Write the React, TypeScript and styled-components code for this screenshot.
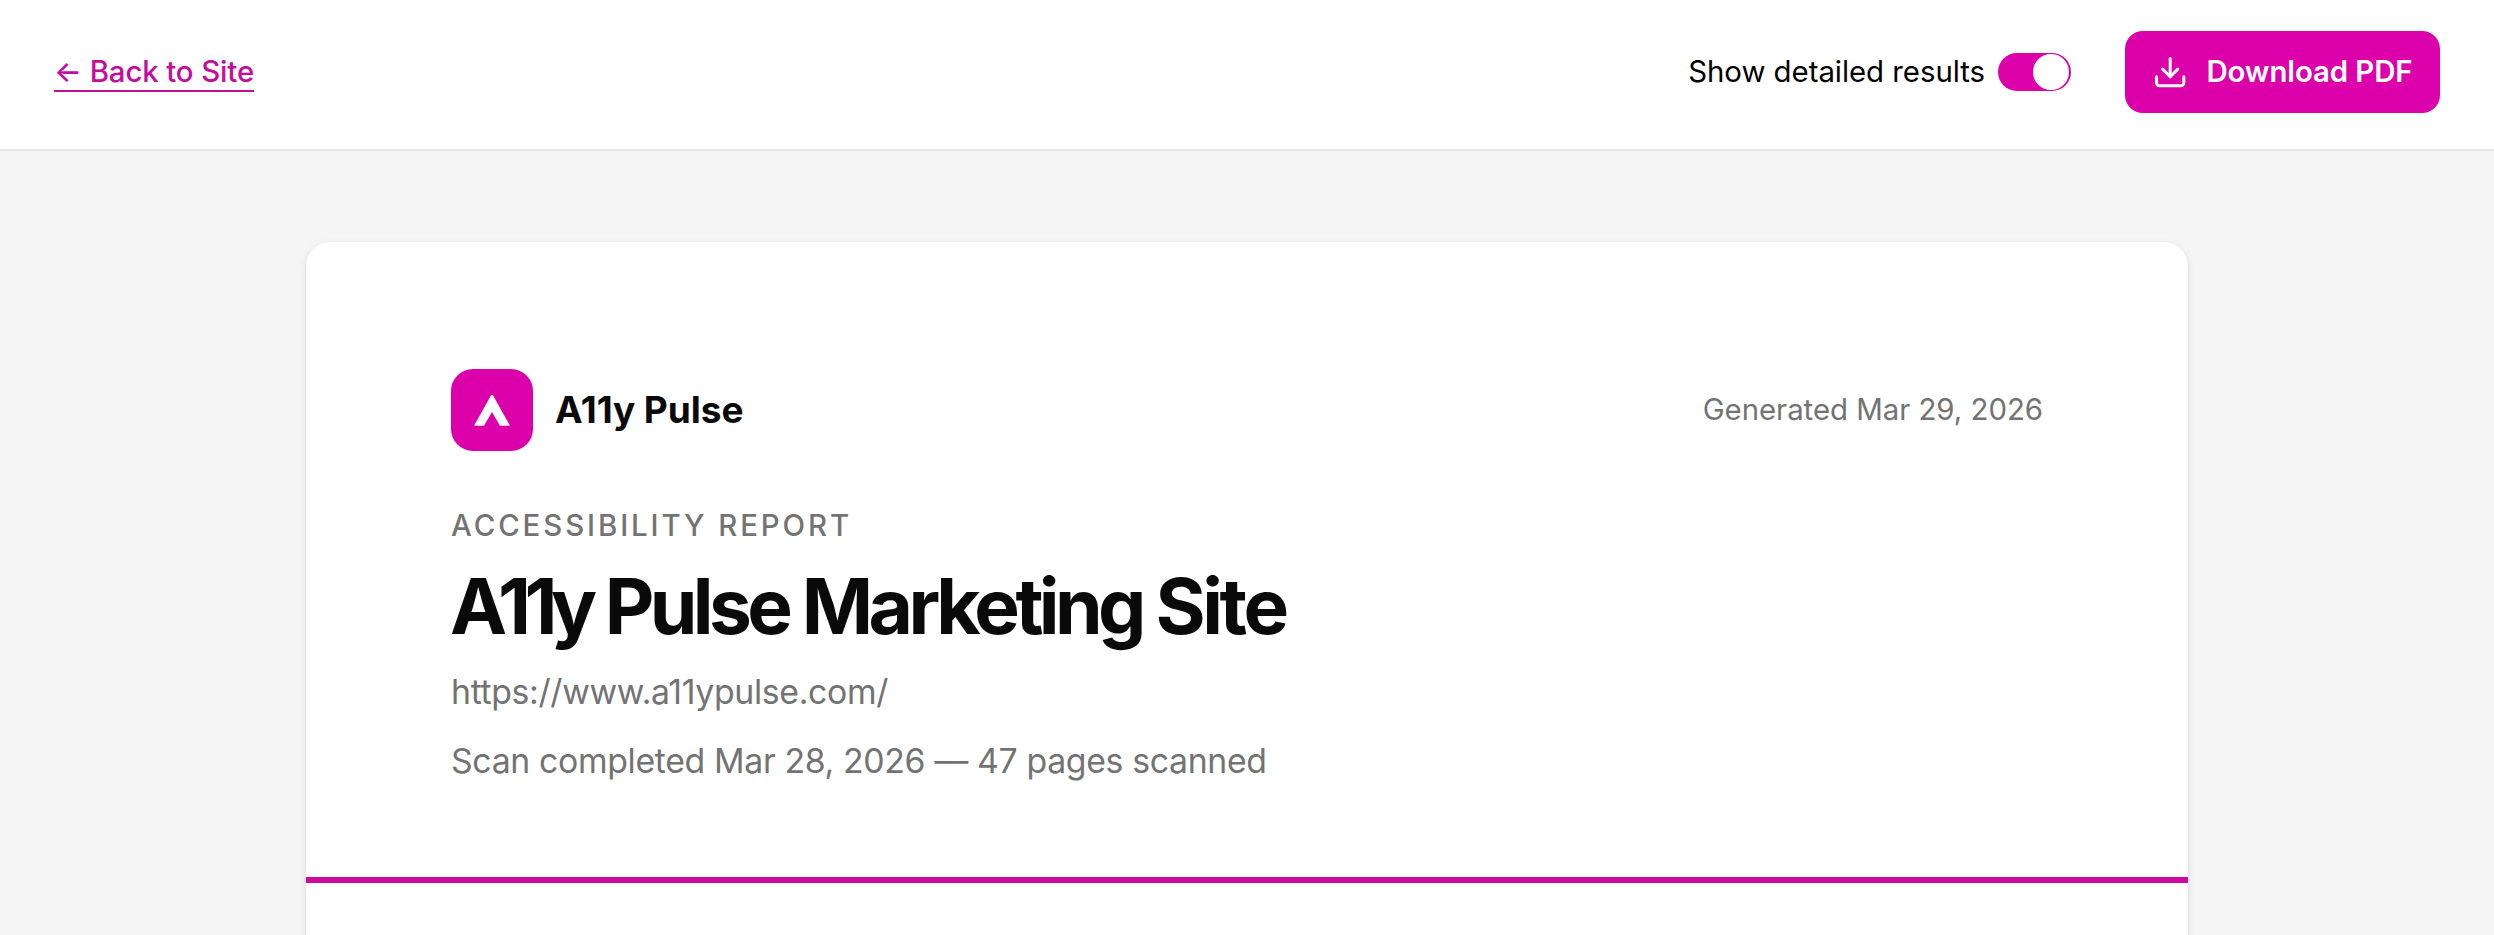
import React from "react";
import styled, { createGlobalStyle } from "styled-components";
import { Download } from "lucide-react";

const accent = "#db00aa";

const GlobalStyle = createGlobalStyle`
  *, *::before, *::after { box-sizing: border-box; }
  body {
    margin: 0;
    background: #f5f5f5;
    color: #0a0a0a;
    font-family: Inter, "Liberation Sans", sans-serif;
    font-size: 29.4px;
    font-weight: 440;
  }
  h1, p { margin: 0; }
`;

const Page = styled.div`
  height: 935px;
  overflow: hidden;
  background: #f5f5f5;
`;

const Toolbar = styled.header`
  display: flex;
  align-items: center;
  justify-content: space-between;
  height: 151px;
  padding: 31px 54px 36px;
  background: #fff;
  border-bottom: 2px solid #e5e5e5;
`;

const BackLink = styled.a`
  width: 200px;
  height: 40px;
  line-height: 39px;
  border-bottom: 2px solid #c0109a;
  color: #c40d9d;
  font-weight: 540;
  letter-spacing: -0.12px;
  text-decoration: none;
  white-space: nowrap;
`;

const Actions = styled.div`
  display: flex;
  align-items: center;
`;

const ToggleLabel = styled.label`
  display: flex;
  align-items: center;
  gap: 13px;
  margin-right: 54px;
  line-height: 44px;
  letter-spacing: -0.04px;
  color: #000;
`;

const Switch = styled.span`
  display: flex;
  justify-content: flex-end;
  align-items: center;
  width: 73px;
  height: 38px;
  padding: 1px 2.5px 1px 1px;
  border-radius: 19px;
  background: ${accent};
`;

const Knob = styled.span`
  width: 36px;
  height: 36px;
  border-radius: 50%;
  background: #fff;
`;

const DownloadButton = styled.button`
  display: flex;
  align-items: center;
  gap: 18px;
  width: 315px;
  height: 82px;
  padding: 0 27px;
  border: 0;
  border-radius: 18px;
  background: ${accent};
  color: #fff;
  font: 600 29.4px/44px Inter, "Liberation Sans", sans-serif;
  letter-spacing: -0.1px;
  white-space: nowrap;
`;

const Report = styled.main`
  width: 1882px;
  height: 760px;
  margin: 91px auto 0;
  border-radius: 24px;
  background: #fff;
  box-shadow: 0 2px 7px rgba(0, 0, 0, 0.1), 0 2px 5px -2px rgba(0, 0, 0, 0.1);
`;

const ReportHeader = styled.section`
  padding: 127px 145px 91px;
  border-bottom: 6px solid #cb0a9f;
`;

const BrandRow = styled.div`
  display: flex;
  align-items: center;
  height: 82px;
  margin-bottom: 53px;
`;

const LogoTile = styled.div`
  display: flex;
  width: 82px;
  height: 82px;
  margin-right: 22px;
  border-radius: 22px;
  background: ${accent};
`;

const BrandName = styled.span`
  font-size: 37px;
  font-weight: 650;
  line-height: 54px;
  letter-spacing: -0.05px;
`;

const Generated = styled.span`
  margin-left: auto;
  line-height: 44px;
  letter-spacing: -0.03px;
  color: #737373;
`;

const Eyebrow = styled.p`
  line-height: 44px;
  font-weight: 530;
  letter-spacing: 0.099em;
  text-transform: uppercase;
  color: #737373;
`;

const Title = styled.h1`
  margin: 16px 0 0 -1px;
  font-size: 76.6px;
  font-weight: 710;
  line-height: 84px;
  letter-spacing: -4.6px;
`;

const Kern = styled.span<{ $by: number }>`
  letter-spacing: ${({ $by }) => $by}px;
`;

const Detail = styled.p`
  margin-top: 19px;
  font-size: 33.8px;
  line-height: 50px;
  letter-spacing: -0.34px;
  color: #737373;
`;

export default function App() {
  return (
    <Page>
      <GlobalStyle />
      <Toolbar>
        <BackLink>← Back to Site</BackLink>
        <Actions>
          <ToggleLabel>
            Show detailed results
            <Switch role="switch" aria-checked="true">
              <Knob />
            </Switch>
          </ToggleLabel>
          <DownloadButton>
            <Download size={36.4} strokeWidth={2} />
            Download PDF
          </DownloadButton>
        </Actions>
      </Toolbar>
      <Report>
        <ReportHeader>
          <BrandRow>
            <LogoTile>
              <svg width="82" height="82" viewBox="0 0 82 82" aria-hidden="true">
                <path d="M40.2 26h1.6L59 56.7H49L41 43 33 56.7H23Z" fill="#fff" />
              </svg>
            </LogoTile>
            <BrandName>A11y Pulse</BrandName>
            <Generated>Generated Mar 29, 2026</Generated>
          </BrandRow>
          <Eyebrow>Accessibility Report</Eyebrow>
          <Title>
            <Kern $by={-9.2}>A</Kern>
            <Kern $by={-6.5}>11</Kern>
            <Kern $by={-6}>y</Kern> Pulse Marketing <Kern $by={-3.4}>Site</Kern>
          </Title>
          <Detail>https://www.a11ypulse.com/</Detail>
          <Detail>Scan completed Mar 28, 2026 — 47 pages scanned</Detail>
        </ReportHeader>
      </Report>
    </Page>
  );
}
